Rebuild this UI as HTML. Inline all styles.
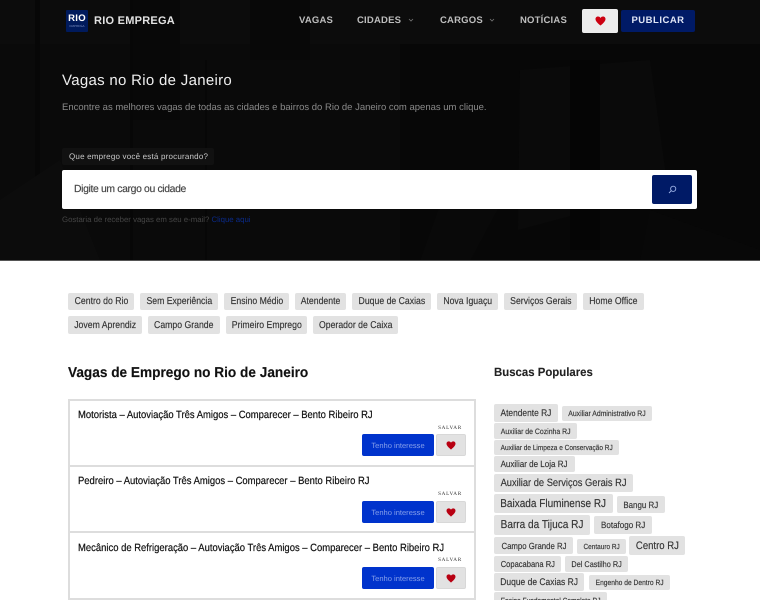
<!DOCTYPE html>
<html lang="pt-BR">
<head>
<meta charset="utf-8">
<title>Rio Emprega</title>
<style>
html,body{margin:0;padding:0;width:760px;height:600px;overflow:hidden;background:#fff}
body{font-family:"Liberation Sans",sans-serif;text-rendering:geometricPrecision}
#w{position:relative;width:760px;height:600px;overflow:hidden;filter:blur(.3px)}
.a{position:absolute;white-space:nowrap}
.n{position:absolute;top:14px;color:#bdbdbd;font:bold 9.5px/13px "Liberation Sans",sans-serif;letter-spacing:.2px;white-space:nowrap}
.c{position:absolute;background:#e2e2e2;border-radius:2px;display:flex;align-items:center;justify-content:center;white-space:nowrap;color:#333;overflow:hidden;-webkit-text-stroke:.15px #333}
.c span{display:inline-block;flex:none;transform:scaleX(.88)}
.t{top:293px;height:17px;font-size:9.9px}
.u{top:316px;height:18px;font-size:9.9px}
.job{position:absolute;left:68px;width:408px;height:68px;border:2px solid #ddd;box-sizing:border-box}
.jt{position:absolute;left:78px;font-size:10.5px;color:#111;line-height:13px;white-space:nowrap;transform:scaleX(.9);transform-origin:left;-webkit-text-stroke:.2px #111}
.b{position:absolute;left:362px;width:72px;height:22px;background:#0033cc;color:#86a0ea;border-radius:2px;font-size:7.55px;display:flex;align-items:center;justify-content:center}
.h{position:absolute;left:436px;width:30px;height:22px;background:#e2e2e2;border:1px solid #d8d8d8;box-sizing:border-box;border-radius:2px;display:flex;align-items:center;justify-content:center}
.s{position:absolute;left:438px;width:24px;text-align:center;font:5.2px/6px "Liberation Serif",serif;letter-spacing:.7px;color:#333}
</style>
</head>
<body>
<div id="w">
<div class="a" style="left:0;top:0;width:760px;height:261px;background:#070707;overflow:hidden">
<svg width="760" height="261" viewBox="0 0 760 261" style="position:absolute;left:0;top:0">
<rect width="400" height="261" fill="#0a0a0a"/>
<rect x="0" y="0" width="760" height="44" fill="#0c0c0c"/>
<path d="M130 0h50v120h-50zM250 0h60v60h-60z" fill="#080808"/>
<path d="M35 0h5v261h-5zM130 0h3v261h-3zM205 60h2v200h-2z" fill="#070707"/>
<path d="M520 70l130 -10 18 130-150 40z" fill="#0a0a0a"/>
<path d="M570 60h30v190h-30z" fill="#050505"/>
<path d="M0 200l60-40 40 100H0z" fill="#0c0c0c"/>
<path d="M650 210l110 40v11H640z" fill="#080808"/>
<path d="M440 205h60l-30 56h-50z" fill="#090909"/>
</svg>
<div class="a" style="left:0;top:260px;width:760px;height:1px;background:#555"></div>
</div>

<div class="a" style="left:66px;top:10px;width:22px;height:22px;background:#001a5c;border-radius:1px"></div>
<div class="a" style="left:67px;top:13px;width:20px;text-align:center;color:#fff;font:bold 9.5px/11px 'Liberation Sans',sans-serif;letter-spacing:.3px">RIO</div>
<div class="a" style="left:67px;top:24px;width:20px;text-align:center;color:#7f92c4;font:3px/4px 'Liberation Sans',sans-serif">EMPREGA</div>
<div class="a" style="left:94px;top:14px;color:#e2e2e2;font:bold 11px/15px 'Liberation Sans',sans-serif;letter-spacing:.25px">RIO EMPREGA</div>

<div class="n" style="left:299px">VAGAS</div>
<div class="n" style="left:357px">CIDADES</div>
<svg class="a" style="left:408px;top:18px" width="6" height="4" viewBox="0 0 6 4"><path d="M1 1l2 2 2-2" fill="none" stroke="#777" stroke-width=".8"/></svg>
<div class="n" style="left:440px">CARGOS</div>
<svg class="a" style="left:489px;top:18px" width="6" height="4" viewBox="0 0 6 4"><path d="M1 1l2 2 2-2" fill="none" stroke="#777" stroke-width=".8"/></svg>
<div class="n" style="left:520px">NOTÍCIAS</div>

<div class="a" style="left:582px;top:9px;width:36px;height:24px;background:#ececec;border-radius:2px;display:flex;align-items:center;justify-content:center">
<svg width="11" height="10" viewBox="0 0 24 22"><path d="M12 21C5 15 1 11 1 6.500 1 3 3.700 1 6.500 1 9 1 11 2.300 12 4.300 13 2.300 15 1 17.500 1 20.300 1 23 3 23 6.500 23 11 19 15 12 21z" fill="#cc0011"/></svg>
</div>
<div class="a" style="left:621px;top:10px;width:74px;height:22px;background:#001a66;border-radius:2px;color:#dfe5f5;font:bold 9.5px/22px 'Liberation Sans',sans-serif;letter-spacing:.5px;text-align:center">PUBLICAR</div>

<div class="a" style="left:62px;top:71px;color:#eee;font-size:15px;line-height:19px;letter-spacing:.3px">Vagas no Rio de Janeiro</div>
<div class="a" style="left:62px;top:101px;color:#8a8a8a;font-size:9.5px;line-height:13px">Encontre as melhores vagas de todas as cidades e bairros do Rio de Janeiro com apenas um clique.</div>

<div class="a" style="left:62px;top:148px;width:152px;height:17px;background:#111;border-radius:2px"></div>
<div class="a" style="left:69px;top:151px;color:#c8c8c8;font-size:8px;line-height:11px;letter-spacing:.2px">Que emprego você está procurando?</div>

<div class="a" style="left:62px;top:170px;width:635px;height:39px;background:#fff;border-radius:2px"></div>
<div class="a" style="left:74px;top:183px;color:#444;font-size:10.4px;line-height:13px;letter-spacing:-.35px;-webkit-text-stroke:.15px #444">Digite um cargo ou cidade</div>
<div class="a" style="left:652px;top:175px;width:40px;height:29px;background:#001a66;border-radius:2px;display:flex;align-items:center;justify-content:center">
<svg width="9" height="9" viewBox="0 0 9 9"><circle cx="5.200" cy="3.800" r="2.600" fill="none" stroke="#9db2e6" stroke-width=".9"/><path d="M3.300 5.700L1 8" stroke="#9db2e6" stroke-width=".9"/></svg>
</div>
<div class="a" style="left:62px;top:214px;color:#454545;font-size:7.8px;line-height:11px">Gostaria de receber vagas em seu e-mail? <span style="color:#0a2a88">Clique aqui</span></div>

<div class="c t" style="left:68px;width:66px"><span>Centro do Rio</span></div>
<div class="c t" style="left:140px;width:78px"><span>Sem Experiência</span></div>
<div class="c t" style="left:224px;width:65px"><span>Ensino Médio</span></div>
<div class="c t" style="left:295px;width:51px"><span>Atendente</span></div>
<div class="c t" style="left:352px;width:79px"><span>Duque de Caxias</span></div>
<div class="c t" style="left:437px;width:61px"><span>Nova Iguaçu</span></div>
<div class="c t" style="left:504px;width:73px"><span>Serviços Gerais</span></div>
<div class="c t" style="left:583px;width:61px"><span>Home Office</span></div>
<div class="c u" style="left:68px;width:74px"><span>Jovem Aprendiz</span></div>
<div class="c u" style="left:148px;width:72px"><span>Campo Grande</span></div>
<div class="c u" style="left:226px;width:81px"><span>Primeiro Emprego</span></div>
<div class="c u" style="left:313px;width:85px"><span>Operador de Caixa</span></div>

<div class="a" style="left:68px;top:364px;color:#111;font-weight:bold;font-size:14.3px;line-height:18px;transform:scaleX(.954);transform-origin:left;-webkit-text-stroke:.15px #111">Vagas de Emprego no Rio de Janeiro</div>
<div class="a" style="left:494px;top:364px;color:#222;font-weight:bold;font-size:12px;line-height:16px;transform:scaleX(.95);transform-origin:left;-webkit-text-stroke:.1px #222">Buscas Populares</div>

<div class="job" style="top:399px"></div>
<div class="job" style="top:465px"></div>
<div class="job" style="top:531px;height:69px"></div>

<div class="jt" style="top:409px">Motorista – Autoviação Três Amigos – Comparecer – Bento Ribeiro RJ</div>
<div class="s" style="top:425px">SALVAR</div>
<div class="b" style="top:434px">Tenho interesse</div>
<div class="h" style="top:434px"><svg width="10" height="9" viewBox="0 0 24 22"><path d="M12 21C5 15 1 11 1 6.500 1 3 3.700 1 6.500 1 9 1 11 2.300 12 4.300 13 2.300 15 1 17.500 1 20.300 1 23 3 23 6.500 23 11 19 15 12 21z" fill="#b80012"/></svg></div>

<div class="jt" style="top:475px">Pedreiro – Autoviação Três Amigos – Comparecer – Bento Ribeiro RJ</div>
<div class="s" style="top:491px">SALVAR</div>
<div class="b" style="top:501px">Tenho interesse</div>
<div class="h" style="top:501px"><svg width="10" height="9" viewBox="0 0 24 22"><path d="M12 21C5 15 1 11 1 6.500 1 3 3.700 1 6.500 1 9 1 11 2.300 12 4.300 13 2.300 15 1 17.500 1 20.300 1 23 3 23 6.500 23 11 19 15 12 21z" fill="#b80012"/></svg></div>

<div class="jt" style="top:542px">Mecânico de Refrigeração – Autoviação Três Amigos – Comparecer – Bento Ribeiro RJ</div>
<div class="s" style="top:557px">SALVAR</div>
<div class="b" style="top:567px">Tenho interesse</div>
<div class="h" style="top:567px"><svg width="10" height="9" viewBox="0 0 24 22"><path d="M12 21C5 15 1 11 1 6.500 1 3 3.700 1 6.500 1 9 1 11 2.300 12 4.300 13 2.300 15 1 17.500 1 20.300 1 23 3 23 6.500 23 11 19 15 12 21z" fill="#b80012"/></svg></div>

<div class="c" style="left:494px;top:404px;width:64px;height:18px;font-size:9.55px"><span>Atendente RJ</span></div>
<div class="c" style="left:562px;top:406px;width:90px;height:15px;font-size:7.8px"><span>Auxiliar Administrativo RJ</span></div>
<div class="c" style="left:494px;top:423px;width:83px;height:16px;font-size:7.85px"><span>Auxiliar de Cozinha RJ</span></div>
<div class="c" style="left:494px;top:440px;width:125px;height:15px;font-size:7.4px"><span>Auxiliar de Limpeza e Conservação RJ</span></div>
<div class="c" style="left:494px;top:456px;width:81px;height:16px;font-size:9.15px"><span>Auxiliar de Loja RJ</span></div>
<div class="c" style="left:494px;top:474px;width:139px;height:18px;font-size:10.6px"><span>Auxiliar de Serviços Gerais RJ</span></div>
<div class="c" style="left:494px;top:494px;width:119px;height:19px;font-size:11.4px"><span>Baixada Fluminense RJ</span></div>
<div class="c" style="left:617px;top:496px;width:48px;height:17px;font-size:9px"><span>Bangu RJ</span></div>
<div class="c" style="left:494px;top:515px;width:96px;height:20px;font-size:11.45px"><span>Barra da Tijuca RJ</span></div>
<div class="c" style="left:594px;top:516px;width:58px;height:18px;font-size:9.15px"><span>Botafogo RJ</span></div>
<div class="c" style="left:494px;top:537px;width:79px;height:17px;font-size:8.9px"><span>Campo Grande RJ</span></div>
<div class="c" style="left:577px;top:539px;width:49px;height:15px;font-size:7.35px"><span>Centauro RJ</span></div>
<div class="c" style="left:629px;top:536px;width:56px;height:19px;font-size:10.85px"><span>Centro RJ</span></div>
<div class="c" style="left:494px;top:556px;width:67px;height:16px;font-size:8.6px"><span>Copacabana RJ</span></div>
<div class="c" style="left:565px;top:556px;width:63px;height:16px;font-size:8.3px"><span>Del Castilho RJ</span></div>
<div class="c" style="left:494px;top:573px;width:90px;height:18px;font-size:9.65px"><span>Duque de Caxias RJ</span></div>
<div class="c" style="left:589px;top:575px;width:81px;height:15px;font-size:7.6px"><span>Engenho de Dentro RJ</span></div>
<div class="c" style="left:494px;top:592px;width:113px;height:16px;font-size:7.45px"><span>Ensino Fundamental Completo RJ</span></div>
</div>
</body>
</html>
